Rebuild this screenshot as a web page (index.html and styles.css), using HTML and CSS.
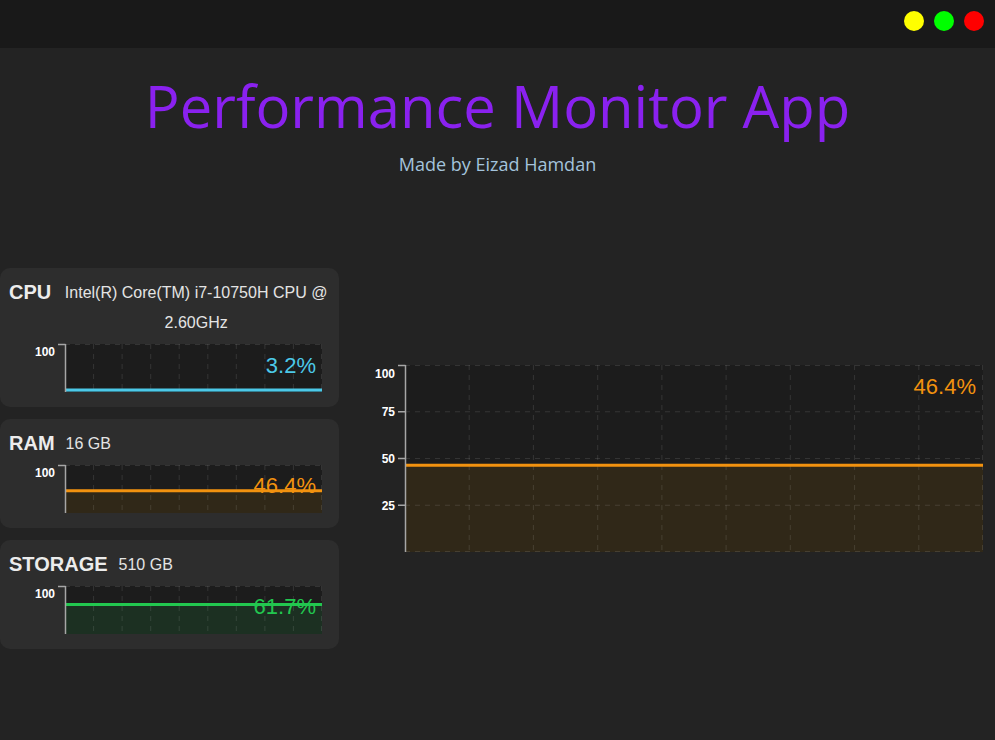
FILE: index.html
```html
<!DOCTYPE html>
<html>
<head>
<meta charset="utf-8">
<title>Performance Monitor App</title>
<link rel="stylesheet" href="styles.css">
</head>
<body>
<div class="titlebar">
  <span class="dot dot-yellow"></span>
  <span class="dot dot-green"></span>
  <span class="dot dot-red"></span>
</div>
<header class="header">
  <h1 class="title">Performance Monitor App</h1>
  <p class="subtitle">Made by Eizad Hamdan</p>
</header>
<main class="main">
  <section class="cards">
    <div class="card">
      <div class="card-head">
        <span class="card-label">CPU</span>
        <span class="card-detail card-detail-center">Intel(R) Core(TM) i7-10750H CPU @ 2.60GHz</span>
      </div>
      <svg class="spark" width="339" height="48" viewBox="0 0 339 48">
        <rect x="65" y="0" width="257" height="48" fill="#1c1c1c"/>
        <g class="grid">
          <line x1="65" y1="0.5" x2="322" y2="0.5"/>
          <line x1="93.6" y1="0" x2="93.6" y2="48"/>
          <line x1="122.1" y1="0" x2="122.1" y2="48"/>
          <line x1="150.7" y1="0" x2="150.7" y2="48"/>
          <line x1="179.2" y1="0" x2="179.2" y2="48"/>
          <line x1="207.8" y1="0" x2="207.8" y2="48"/>
          <line x1="236.3" y1="0" x2="236.3" y2="48"/>
          <line x1="264.9" y1="0" x2="264.9" y2="48"/>
          <line x1="293.4" y1="0" x2="293.4" y2="48"/>
          <line x1="321.5" y1="0" x2="321.5" y2="48"/>
        </g>
        <rect x="65" y="46.5" width="257" height="1.5" fill="#1d3a42"/>
        <line x1="65" y1="46" x2="322" y2="46" stroke="#4cc9e8" stroke-width="3"/>
        <line class="axis" x1="65.5" y1="0" x2="65.5" y2="48"/>
        <line class="axis" x1="58" y1="0.5" x2="65.5" y2="0.5"/>
        <text class="tick-label" x="55" y="12" text-anchor="end">100</text>
        <text class="value" x="316" y="29" text-anchor="end" fill="#4cc9e8">3.2%</text>
      </svg>
    </div>
    <div class="card">
      <div class="card-head">
        <span class="card-label">RAM</span>
        <span class="card-detail">16 GB</span>
      </div>
      <svg class="spark" width="339" height="48" viewBox="0 0 339 48">
        <rect x="65" y="0" width="257" height="48" fill="#1c1c1c"/>
        <rect x="65" y="25.7" width="257" height="22.3" fill="#302818"/>
        <g class="grid">
          <line x1="65" y1="0.5" x2="322" y2="0.5"/>
          <line x1="93.6" y1="0" x2="93.6" y2="48"/>
          <line x1="122.1" y1="0" x2="122.1" y2="48"/>
          <line x1="150.7" y1="0" x2="150.7" y2="48"/>
          <line x1="179.2" y1="0" x2="179.2" y2="48"/>
          <line x1="207.8" y1="0" x2="207.8" y2="48"/>
          <line x1="236.3" y1="0" x2="236.3" y2="48"/>
          <line x1="264.9" y1="0" x2="264.9" y2="48"/>
          <line x1="293.4" y1="0" x2="293.4" y2="48"/>
          <line x1="321.5" y1="0" x2="321.5" y2="48"/>
        </g>
        <line x1="65" y1="25.7" x2="322" y2="25.7" stroke="#f2920f" stroke-width="3"/>
        <line class="axis" x1="65.5" y1="0" x2="65.5" y2="48"/>
        <line class="axis" x1="58" y1="0.5" x2="65.5" y2="0.5"/>
        <text class="tick-label" x="55" y="12" text-anchor="end">100</text>
        <text class="value" x="316" y="28" text-anchor="end" fill="#f2920f">46.4%</text>
      </svg>
    </div>
    <div class="card">
      <div class="card-head">
        <span class="card-label">STORAGE</span>
        <span class="card-detail">510 GB</span>
      </div>
      <svg class="spark" width="339" height="48" viewBox="0 0 339 48">
        <rect x="65" y="0" width="257" height="48" fill="#1c1c1c"/>
        <rect x="65" y="18.4" width="257" height="29.6" fill="#1c3022"/>
        <g class="grid">
          <line x1="65" y1="0.5" x2="322" y2="0.5"/>
          <line x1="93.6" y1="0" x2="93.6" y2="48"/>
          <line x1="122.1" y1="0" x2="122.1" y2="48"/>
          <line x1="150.7" y1="0" x2="150.7" y2="48"/>
          <line x1="179.2" y1="0" x2="179.2" y2="48"/>
          <line x1="207.8" y1="0" x2="207.8" y2="48"/>
          <line x1="236.3" y1="0" x2="236.3" y2="48"/>
          <line x1="264.9" y1="0" x2="264.9" y2="48"/>
          <line x1="293.4" y1="0" x2="293.4" y2="48"/>
          <line x1="321.5" y1="0" x2="321.5" y2="48"/>
        </g>
        <line x1="65" y1="18.4" x2="322" y2="18.4" stroke="#22c74f" stroke-width="3"/>
        <line class="axis" x1="65.5" y1="0" x2="65.5" y2="48"/>
        <line class="axis" x1="58" y1="0.5" x2="65.5" y2="0.5"/>
        <text class="tick-label" x="55" y="12" text-anchor="end">100</text>
        <text class="value" x="316" y="28" text-anchor="end" fill="#22c74f">61.7%</text>
      </svg>
    </div>
  </section>
  <section class="big-chart">
    <svg width="620" height="188" viewBox="0 0 620 188">
      <rect x="41" y="0" width="578" height="187" fill="#1c1c1c"/>
      <rect x="41" y="100.2" width="578" height="86.8" fill="#302818"/>
      <g class="grid">
        <line x1="41" y1="0.5" x2="619" y2="0.5"/>
        <line x1="41" y1="46.75" x2="619" y2="46.75"/>
        <line x1="41" y1="93.5" x2="619" y2="93.5"/>
        <line x1="41" y1="140.25" x2="619" y2="140.25"/>
        <line x1="41" y1="186.5" x2="619" y2="186.5"/>
        <line x1="105.2" y1="0" x2="105.2" y2="187"/>
        <line x1="169.4" y1="0" x2="169.4" y2="187"/>
        <line x1="233.7" y1="0" x2="233.7" y2="187"/>
        <line x1="297.9" y1="0" x2="297.9" y2="187"/>
        <line x1="362.1" y1="0" x2="362.1" y2="187"/>
        <line x1="426.3" y1="0" x2="426.3" y2="187"/>
        <line x1="490.6" y1="0" x2="490.6" y2="187"/>
        <line x1="554.8" y1="0" x2="554.8" y2="187"/>
        <line x1="618.5" y1="0" x2="618.5" y2="187"/>
      </g>
      <line x1="41" y1="100.2" x2="619" y2="100.2" stroke="#f2920f" stroke-width="3"/>
      <line class="axis" x1="41.5" y1="0" x2="41.5" y2="187"/>
      <line class="axis" x1="34" y1="0.5" x2="41.5" y2="0.5"/>
      <line class="axis" x1="34" y1="46.75" x2="41.5" y2="46.75"/>
      <line class="axis" x1="34" y1="93.5" x2="41.5" y2="93.5"/>
      <line class="axis" x1="34" y1="140.25" x2="41.5" y2="140.25"/>
      <text class="tick-label" x="31" y="13" text-anchor="end">100</text>
      <text class="tick-label" x="31" y="51" text-anchor="end">75</text>
      <text class="tick-label" x="31" y="97.8" text-anchor="end">50</text>
      <text class="tick-label" x="31" y="144.5" text-anchor="end">25</text>
      <text class="value" x="612" y="29" text-anchor="end" fill="#f2920f">46.4%</text>
    </svg>
  </section>
</main>
</body>
</html>
```

FILE: styles.css
```css
* { box-sizing: border-box; }

html, body {
  margin: 0;
  padding: 0;
  background: #232323;
  height: 100%;
}

body {
  font-family: "Liberation Sans", Arial, sans-serif;
  color: #e8e8e8;
  overflow: hidden;
}

.titlebar {
  height: 48px;
  background: #191919;
  display: flex;
  justify-content: flex-end;
  align-items: flex-start;
  gap: 10px;
  padding: 11px 11px 0 0;
}

.dot {
  width: 20px;
  height: 20px;
  border-radius: 50%;
  display: block;
}
.dot-yellow { background: #ffff00; }
.dot-green { background: #00ff00; }
.dot-red { background: #ff0000; }

.header {
  text-align: center;
}

.title {
  margin: 29px 0 0;
  font-family: "Open Sans", "Noto Sans", sans-serif;
  font-weight: 500;
  font-size: 58px;
  line-height: 58px;
  color: #8a21ef;
}

.subtitle {
  margin: 17px 0 0;
  font-family: "Open Sans", "Noto Sans", sans-serif;
  font-size: 18px;
  line-height: 24px;
  color: #a3c3dc;
}

.main {
  display: flex;
  align-items: center;
  gap: 25px;
  margin-top: 92px;
  padding-right: 11px;
}

.cards {
  width: 339px;
  flex: none;
  display: flex;
  flex-direction: column;
  gap: 12px;
}

.card {
  background: #2d2d2d;
  border-radius: 10px;
  padding: 10px 9px 15px 9px;
}

.card-head {
  display: flex;
  align-items: flex-start;
  gap: 11px;
  margin-bottom: 6px;
}

.card-label {
  font-weight: 700;
  font-size: 20px;
  line-height: 29px;
  color: #ececec;
  flex: none;
}

.card-detail {
  font-size: 16px;
  line-height: 30px;
  color: #e4e4e4;
}

.card-detail-center {
  flex: 1;
  text-align: center;
}

.spark {
  display: block;
  margin: 0 -9px 0 -9px;
  overflow: visible;
}

.big-chart svg {
  display: block;
  overflow: visible;
}

.grid line {
  stroke: rgba(255, 255, 255, 0.11);
  stroke-width: 1;
  stroke-dasharray: 5 5;
}

.axis {
  stroke: #a6a6a6;
  stroke-width: 1.5;
}

.tick-label {
  font-family: "Liberation Sans", Arial, sans-serif;
  font-weight: 700;
  font-size: 12px;
  fill: #ffffff;
}

.value {
  font-family: "Liberation Sans", Arial, sans-serif;
  font-size: 22px;
}
```
